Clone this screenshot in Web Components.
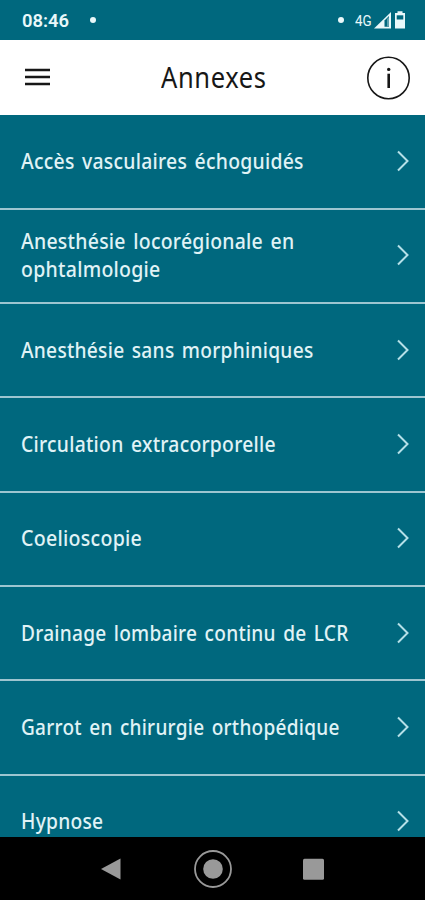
<!DOCTYPE html>
<html lang="fr">
<head>
<meta charset="utf-8">
<title>Annexes</title>
<style>
html,body{margin:0;height:100%;overflow:hidden;background:#00687e}
</style>
</head>
<body>
<annex-app></annex-app>
<script>
// Single line of text condensed horizontally to a given width.
class FitText extends HTMLElement{
  connectedCallback(){
    const r=this.attachShadow({mode:'open'});
    r.innerHTML=`<style>:host{display:block;white-space:nowrap;width:${this.getAttribute('w')}px}
      span{display:inline-block;transform-origin:0 50%}</style><span><slot></slot></span>`;
    const s=r.querySelector('span');
    s.style.transform=`scaleX(${this.getAttribute('w')/s.offsetWidth})`;
  }
}

class StatusBar extends HTMLElement{
  constructor(){super();this.attachShadow({mode:'open'}).innerHTML=`<style>
    :host{display:flex;align-items:center;height:40px;box-sizing:border-box;padding:2px 19px 0 22px;background:#00687e;color:#e9f8fa;font-family:Roboto,sans-serif}
    .t{font-size:18.8px;font-weight:600}
    .d{width:6px;height:6px;border-radius:50%;background:#e9f8fa;margin-left:21px;margin-top:-2px}
    .g{flex:1}
    .n{font-size:15px;margin:0 2px 0 11px}
    svg{display:block;margin-top:-2px}</style>
    <fit-text class="t" w="47">08:46</fit-text><i class="d"></i><span class="g"></span>
    <i class="d"></i><fit-text class="n" w="17">4G</fit-text>
    <svg width="32" height="20" viewBox="0 0 32 20"><path d="M0 18.5 17 2V18.5Z" fill="#e9f8fa"/><path d="M10.5 10.5 15 6V16.7H10.5Z" fill="#00687e"/><path d="M13 9 15 7V16.7H13Z" fill="#5a9fad"/><path d="M21.5 3H23.5V1.2H28.5V3H31V18.5H21V3Z" fill="#e9f8fa"/><path d="M22.7 5.3H29.3V9.5H22.7Z" fill="#00687e"/></svg>`}
}

class AppHeader extends HTMLElement{
  constructor(){super();this.attachShadow({mode:'open'}).innerHTML=`<style>
    :host{display:grid;grid-template-columns:136px 105px 1fr;align-items:center;height:75px;box-sizing:border-box;padding:0 15px 2px 25px;background:#fff;color:#171717;font:400 28.5px/40px "Noto Sans",sans-serif;letter-spacing:.7px}
    svg{display:block}.i{justify-self:end;margin-top:2px}</style>
    <svg width="25" height="18" viewBox="0 0 25 18"><path d="M0 2H25M0 9H25M0 16H25" stroke="#171717" stroke-width="2.3"/></svg>
    <fit-text w="105.5"><slot></slot></fit-text>
    <svg class="i" width="44" height="44" viewBox="0 0 44 44"><circle cx="22.5" cy="22" r="20.7" fill="none" stroke="#171717" stroke-width="1.6"/><circle cx="22.7" cy="13.4" r="1.7" fill="#171717"/><path d="M22.7 17.7V32" stroke="#171717" stroke-width="2.6"/></svg>`}
}

class MenuRow extends HTMLElement{
  constructor(){super();this.attachShadow({mode:'open'}).innerHTML=`<style>
    :host{display:flex;align-items:center;justify-content:space-between;height:94.33px;flex:none;box-sizing:border-box;padding:0 15px 1.4px 21px;border-bottom:2px solid #9dc5d0;color:#e0f3f6;font:500 22.5px/28px "Noto Sans",sans-serif;letter-spacing:.3px;word-spacing:2.5px}
    svg{display:block}</style>
    <div><slot></slot></div>
    <svg width="14" height="22" viewBox="0 0 14 22"><path d="M2 1.5 11.5 11 2 20.5" fill="none" stroke="#b5e0e8" stroke-width="2"/></svg>`}
}

class NavBar extends HTMLElement{
  constructor(){super();this.attachShadow({mode:'open'}).innerHTML=`<style>
    :host{display:flex;align-items:center;height:63px;padding-left:101px;background:#000}
    svg{display:block}</style>
    <svg width="20" height="40" viewBox="0 0 20 40"><path d="M0 20 19.5 9.5V30.5Z" fill="#999"/></svg>
    <svg style="margin-left:72px" width="40" height="40" viewBox="0 0 40 40"><circle cx="20" cy="20" r="18" fill="none" stroke="#999" stroke-width="1.8"/><circle cx="20" cy="20" r="9.8" fill="#999"/></svg>
    <svg style="margin-left:70px" width="21" height="40" viewBox="0 0 21 40"><rect y="9.7" width="21" height="21" rx="1.5" fill="#999"/></svg>`}
}

class AnnexApp extends HTMLElement{
  constructor(){super();this.attachShadow({mode:'open'}).innerHTML=`<style>
    :host{display:flex;flex-direction:column;height:900px;background:#00687e}
    main{flex:1;min-height:0;overflow:hidden;display:flex;flex-direction:column;padding-top:.5px}</style>
    <status-bar></status-bar>
    <app-header>Annexes</app-header>
    <main>
      <menu-row><fit-text w="282.5">Accès vasculaires échoguidés</fit-text></menu-row>
      <menu-row><fit-text w="273">Anesthésie locorégionale en</fit-text><fit-text w="139.5">ophtalmologie</fit-text></menu-row>
      <menu-row><fit-text w="292.5">Anesthésie sans morphiniques</fit-text></menu-row>
      <menu-row><fit-text w="255">Circulation extracorporelle</fit-text></menu-row>
      <menu-row><fit-text w="121">Coelioscopie</fit-text></menu-row>
      <menu-row><fit-text w="327.5">Drainage lombaire continu de LCR</fit-text></menu-row>
      <menu-row><fit-text w="319">Garrot en chirurgie orthopédique</fit-text></menu-row>
      <menu-row><fit-text w="82">Hypnose</fit-text></menu-row>
    </main>
    <nav-bar></nav-bar>`}
}
customElements.define('fit-text',FitText);
customElements.define('status-bar',StatusBar);
customElements.define('app-header',AppHeader);
customElements.define('menu-row',MenuRow);
customElements.define('nav-bar',NavBar);
customElements.define('annex-app',AnnexApp);
</script>
</body>
</html>
